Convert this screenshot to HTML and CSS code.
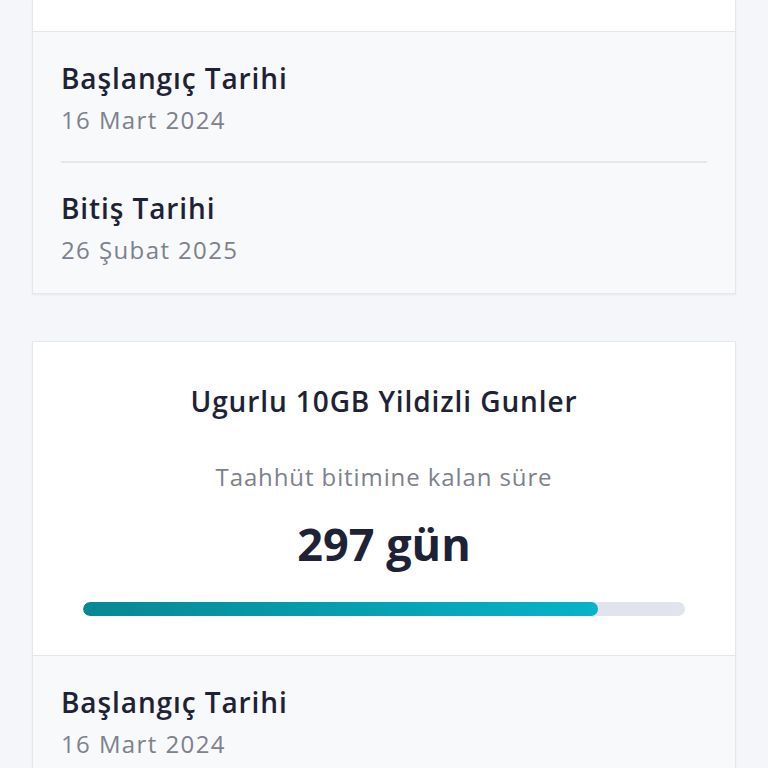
FILE: index.html
```html
<!DOCTYPE html>
<html lang="tr">
<head>
<meta charset="utf-8">
<link rel="stylesheet" href="styles.css">
</head>
<body>
<main class="page">
  <section class="card card-first">
    <div class="card-top"></div>
    <div class="card-details">
      <div class="detail">
        <div class="detail-label">Başlangıç Tarihi</div>
        <div class="detail-value">16 Mart 2024</div>
      </div>
      <div class="divider"></div>
      <div class="detail">
        <div class="detail-label">Bitiş Tarihi</div>
        <div class="detail-value">26 Şubat 2025</div>
      </div>
    </div>
  </section>

  <section class="card">
    <div class="card-summary">
      <div class="plan-name">Ugurlu 10GB Yildizli Gunler</div>
      <div class="remaining-label">Taahhüt bitimine kalan süre</div>
      <div class="remaining-value">297 gün</div>
      <div class="progress"><div class="progress-fill" style="width: 85.6%"></div></div>
    </div>
    <div class="card-details">
      <div class="detail">
        <div class="detail-label">Başlangıç Tarihi</div>
        <div class="detail-value">16 Mart 2024</div>
      </div>
    </div>
  </section>
</main>
</body>
</html>
```

FILE: styles.css
```css
html, body {
  margin: 0;
  padding: 0;
  background: #f4f6f9;
  font-family: "Open Sans", "Noto Sans", sans-serif;
  color: #1e2236;
}
.page {
  display: flex;
  flex-direction: column;
  gap: 47px;
  padding: 0 32px;
}
.card {
  background: #ffffff;
  border: 1px solid #e4e7ec;
  box-shadow: 0 1px 2px rgba(30, 34, 54, 0.06);
}
.card-first {
  border-top: none;
}
.card-top {
  height: 31px;
}
.card-details {
  background: #f8f9fb;
  border-top: 1px solid #e4e7ec;
  padding: 28px 28px 27px 28px;
  display: flex;
  flex-direction: column;
}
.detail {
  display: flex;
  flex-direction: column;
  gap: 8px;
}
.detail-label {
  font-size: 28px;
  line-height: 36px;
  font-weight: 600;
  letter-spacing: 0.9px;
  color: #1e2236;
}
.detail-value {
  font-size: 24px;
  line-height: 32px;
  letter-spacing: 1.4px;
  color: #7d818c;
}
.divider {
  height: 2px;
  background: #e6e8ec;
  margin: 25px 0 27px 0;
}
.card-summary {
  padding: 41px 50px 39px 50px;
  display: flex;
  flex-direction: column;
  align-items: center;
  text-align: center;
}
.plan-name {
  font-size: 28px;
  line-height: 36px;
  font-weight: 600;
  letter-spacing: 0.9px;
  color: #1e2236;
}
.remaining-label {
  margin-top: 42px;
  font-size: 24px;
  line-height: 32px;
  letter-spacing: 0.9px;
  color: #7d818c;
}
.remaining-value {
  margin-top: 23px;
  font-size: 45px;
  line-height: 56px;
  font-weight: 700;
  color: #1e2236;
}
.progress {
  margin-top: 30px;
  align-self: stretch;
  height: 14px;
  border-radius: 7px;
  background: #e1e4ec;
  overflow: hidden;
}
.progress-fill {
  height: 100%;
  border-radius: 7px;
  background: linear-gradient(90deg, #078892 0%, #05a3b3 60%, #07b3c8 100%);
}
```
